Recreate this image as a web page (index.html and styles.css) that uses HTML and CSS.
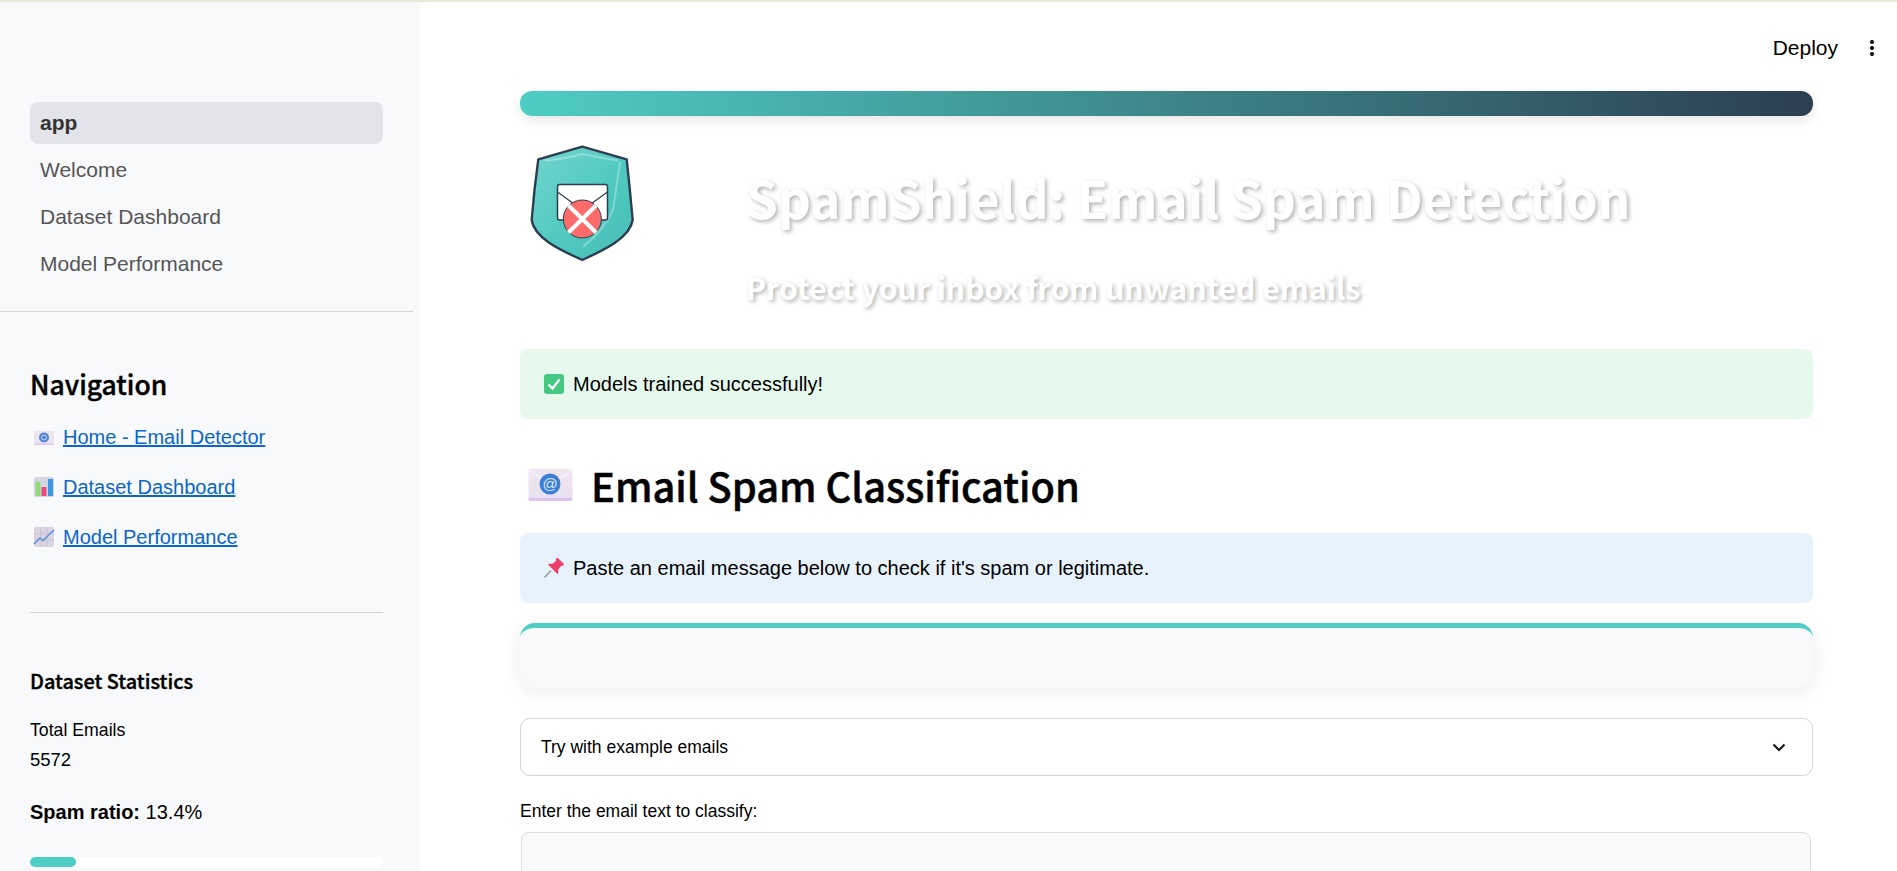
FILE: index.html
```html
<!DOCTYPE html>
<html>
<head>
  <title>SpamShield</title>
  <meta charset="UTF-8">
  <link rel="stylesheet" href="styles.css">
</head>
<body>
  <div class="top-line"></div>
  <div class="app">
    <aside class="sidebar">
      <nav class="page-nav">
        <a class="page-link active">app</a>
        <a class="page-link">Welcome</a>
        <a class="page-link">Dataset Dashboard</a>
        <a class="page-link">Model Performance</a>
      </nav>
      <div class="nav-rule"></div>
      <div class="side-content">
        <h2 class="side-title">Navigation</h2>
        <p class="side-link">
          <svg class="side-icon" viewBox="0 0 22 22">
            <rect x="1" y="5" width="20" height="14" fill="#ece4f0"/>
            <rect x="1" y="17.5" width="20" height="1.5" fill="#dcc6f0"/>
            <circle cx="11" cy="11.5" r="5" fill="#5585d2"/>
            <circle cx="11" cy="11.5" r="2.4" fill="none" stroke="#c9d8f2" stroke-width="1"/>
          </svg>
          <a>Home - Email Detector</a>
        </p>
        <p class="side-link">
          <svg class="side-icon" viewBox="0 0 22 22">
            <rect x="1" y="1" width="20" height="20" rx="2" fill="#d5d3de"/>
            <rect x="2.5" y="6" width="5" height="14" fill="#8fdc7a"/>
            <rect x="8.5" y="11" width="5" height="9" fill="#ea4a7c"/>
            <rect x="15" y="3" width="5" height="17" fill="#3b97e0"/>
          </svg>
          <a>Dataset Dashboard</a>
        </p>
        <p class="side-link">
          <svg class="side-icon" viewBox="0 0 22 22">
            <rect x="1" y="1" width="20" height="20" rx="2" fill="#d9d3e2"/>
            <path d="M1 7.5H21M1 14H21M7.5 1V21M14 1V21" stroke="#c6bdd2" stroke-width=".7"/>
            <path d="M1 18L7 12L10 14.5L21 4" fill="none" stroke="#5a90d8" stroke-width="1.6"/>
          </svg>
          <a>Model Performance</a>
        </p>
        <div class="side-rule"></div>
        <h3 class="stats-title">Dataset Statistics</h3>
        <p class="stat-label">Total Emails</p>
        <p class="stat-value">5572</p>
        <p class="ratio"><strong>Spam ratio:</strong> 13.4%</p>
        <div class="progress"><div class="progress-fill" style="width: 13%"></div></div>
      </div>
    </aside>

    <main class="main">
      <header class="toolbar">
        <span class="deploy">Deploy</span>
        <svg class="menu-dots" viewBox="0 0 6 18" width="6" height="18">
          <circle cx="3" cy="3" r="2"/>
          <circle cx="3" cy="9" r="2"/>
          <circle cx="3" cy="15" r="2"/>
        </svg>
      </header>
      <div class="content">
        <div class="gradient-bar"></div>
        <section class="hero">
          <svg class="logo" viewBox="0 0 130 130" width="130" height="130">
            <defs>
              <linearGradient id="shieldFill" x1="0" y1="0" x2="1" y2="1">
                <stop offset="0" stop-color="#74d5ce"/>
                <stop offset=".55" stop-color="#4fc9c0"/>
                <stop offset="1" stop-color="#47bdb4"/>
              </linearGradient>
            </defs>
            <path d="M62.3 6.7L106.7 19.3Q110 50 112.7 80C110 98 84 110 62.3 120C40 110 14 98 11.7 80Q14 50 18.3 19.3Z" fill="url(#shieldFill)" stroke="#2c3e50" stroke-width="2.4" stroke-linejoin="round"/>
            <path d="M25 20.5Q48 18 62.3 14Q80 18 98 20.5" fill="none" stroke="#fff" stroke-opacity=".3" stroke-width="2"/>
            <path d="M100 22Q96 50 93 70Q84 90 62.7 107" fill="none" stroke="#fff" stroke-opacity=".3" stroke-width="2"/>
            <rect x="37.5" y="44.5" width="50" height="35.5" rx="2" fill="#fff" stroke="#2c3e50" stroke-width="1.5"/>
            <path d="M37.5 52L62.5 70L87.5 52" fill="none" stroke="#2c3e50" stroke-width="1.2"/>
            <circle cx="62.3" cy="79" r="19" fill="#ff6b6b" stroke="#2c3e50" stroke-width="1"/>
            <path d="M48.500 65.500L76 92.500M76 65.500L48.500 92.500" stroke="#fff" stroke-width="4"/>
          </svg>
          <div class="hero-text">
            <h1 class="hero-title">SpamShield: Email Spam Detection</h1>
            <p class="hero-sub">Protect your inbox from unwanted emails</p>
          </div>
        </section>

        <div class="alert alert-success">
          <svg class="alert-icon" viewBox="0 0 22 22">
            <rect x="1" y="1" width="20" height="20" rx="3" fill="#46c883"/>
            <path d="M5.5 11.5L9.5 15.5L16.5 6.5" fill="none" stroke="#fff" stroke-width="2.2"/>
          </svg>
          <span>Models trained successfully!</span>
        </div>

        <h2 class="section-title">
          <svg class="title-icon" viewBox="0 0 45 32">
            <defs>
              <linearGradient id="envFill" x1="0" y1="0" x2="0" y2="1">
                <stop offset="0" stop-color="#efe6ef"/>
                <stop offset="1" stop-color="#e9e0f0"/>
              </linearGradient>
            </defs>
            <rect x="0.5" y="0" width="44" height="32" rx="2.5" fill="url(#envFill)"/>
            <path d="M0.5 29H44.5V29.5A2.5 2.5 0 0 1 42 32H3A2.5 2.5 0 0 1 0.5 29.5Z" fill="#dcc3f0"/>
            <path d="M1 1L22.5 16L44 1" fill="none" stroke="#f8f4f8" stroke-width="1.4"/>
            <circle cx="22" cy="15" r="10.5" fill="#3a7fd5"/>
            <text x="22" y="20" class="at-sign">@</text>
          </svg>
          <span>Email Spam Classification</span>
        </h2>

        <div class="alert alert-info">
          <svg class="alert-icon" viewBox="0 0 22 22">
            <path d="M1.5 20.5L8 13.5" stroke="#9a9aa5" stroke-width="1.6"/>
            <path d="M13 1.5C14 .8 15 1 15.5 1.5L20.5 6.5C21 7 21 8.3 20 8.8L18 9L15 13C15.500 14.500 15.500 16 14.500 17L5 7.500C6 6.500 7.500 6.500 9 7L13 4Z" fill="#ec3f69"/>
          </svg>
          <span>Paste an email message below to check if it's spam or legitimate.</span>
        </div>

        <div class="card"></div>

        <div class="select">
          <span>Try with example emails</span>
          <svg viewBox="0 0 14 9" width="14" height="9" class="chevron">
            <path d="M1.5 1.5L7 7L12.5 1.5" fill="none" stroke="#111" stroke-width="2"/>
          </svg>
        </div>

        <label class="field-label">Enter the email text to classify:</label>
        <div class="textarea"></div>
      </div>
    </main>
  </div>
</body>
</html>
```

FILE: styles.css
```css
html, body {
  height: 100%;
}
body {
  margin: 0;
  overflow: hidden;
  background-color: #ffffff;
  color: #000000;
  font-family: "Liberation Sans", Arial, sans-serif;
}
.top-line {
  height: 2px;
  background-color: #e8e9d9;
}
.app {
  display: flex;
  height: calc(100% - 2px);
  overflow: hidden;
}

/* sidebar */
.sidebar {
  width: 420px;
  flex-shrink: 0;
  background-color: #f8f9fb;
  overflow: hidden;
}
.page-nav {
  display: flex;
  flex-direction: column;
  gap: 5px;
  padding: 100px 37px 0 30px;
}
.page-link {
  height: 42px;
  line-height: 42px;
  padding-left: 10px;
  border-radius: 8px;
  font-size: 21px;
  color: #555555;
}
.page-link.active {
  background-color: #e3e3eb;
  color: #333333;
  font-weight: bold;
}
.nav-rule {
  height: 1px;
  margin: 26px 7px 0 0;
  background-color: #d5d5d8;
}
.side-content {
  padding: 0 37px 0 30px;
}
.side-title {
  margin: 52px 0 0 0;
  font-family: "Noto Sans CJK SC", "Noto Sans", sans-serif;
  font-size: 26.500px;
  line-height: 40px;
  font-weight: 500;
  -webkit-text-stroke: 0.4px #000000;
}
.side-link {
  display: flex;
  align-items: center;
  gap: 8px;
  height: 26px;
  margin: 20px 0 24px 3px;
  font-size: 20px;
}
.side-link a {
  color: #0a66c8;
  text-decoration: underline;
}
.side-icon {
  width: 22px;
  height: 22px;
}
.side-rule {
  height: 1px;
  margin-top: 62px;
  background-color: #d5d5d8;
}
.stats-title {
  margin: 52px 0 0 0;
  font-family: "Noto Sans CJK SC", "Noto Sans", sans-serif;
  font-size: 19.900px;
  line-height: 32px;
  font-weight: 500;
  -webkit-text-stroke: 0.4px #000000;
}
.stat-label {
  margin: 18px 0 0 0;
  font-size: 17.700px;
  line-height: 30px;
}
.stat-value {
  margin: 0;
  font-size: 18.500px;
  line-height: 30px;
}
.ratio {
  margin: 22px 0 0 0;
  font-size: 20px;
  line-height: 30px;
}
.progress {
  height: 10px;
  margin-top: 30px;
  border-radius: 6px;
  background-color: #ffffff;
}
.progress-fill {
  height: 100%;
  border-radius: 6px;
  background-color: #4ecdc4;
}

/* main column */
.main {
  flex: 1;
  min-width: 0;
}
.toolbar {
  display: flex;
  align-items: center;
  justify-content: flex-end;
  gap: 31px;
  height: 30px;
  padding: 31px 22px 0 0;
}
.deploy {
  font-size: 21px;
}
.content {
  padding: 28px 84px 0 100px;
}
.gradient-bar {
  height: 25px;
  border-radius: 12px;
  background: linear-gradient(90deg, #4ecdc4, #2c3e50);
  box-shadow: 0 4px 12px rgba(0, 0, 0, 0.1);
}
.hero {
  display: flex;
  height: 233px;
  padding-top: 24px;
  box-sizing: border-box;
}
.logo {
  flex-shrink: 0;
}
.hero-text {
  margin-left: 96px;
}
.hero-title {
  margin: 21px 0 0 0;
  font-family: "Noto Sans CJK SC", "Noto Sans", sans-serif;
  font-size: 51.150px;
  line-height: 72px;
  font-weight: 700;
  color: #ffffff;
  text-shadow: 2px 2px 4px rgba(0, 0, 0, 0.3);
}
.hero-sub {
  margin: 34px 0 0 0;
  font-family: "Noto Sans CJK SC", "Noto Sans", sans-serif;
  font-size: 30.150px;
  line-height: 40px;
  font-weight: 600;
  color: #ffffff;
  text-shadow: 2px 2px 4px rgba(0, 0, 0, 0.3);
}
.alert {
  display: flex;
  align-items: center;
  gap: 8px;
  height: 70px;
  padding-left: 23px;
  border-radius: 8px;
  font-size: 20px;
}
.alert-success {
  background-color: #e6f9ed;
}
.alert-info {
  background-color: #e7f2fd;
}
.alert-icon {
  width: 22px;
  height: 22px;
}
.section-title {
  display: flex;
  align-items: center;
  gap: 18px;
  box-sizing: border-box;
  height: 114px;
  margin: 0;
  padding: 17px 0 0 8px;
  font-family: "Noto Sans CJK SC", "Noto Sans", sans-serif;
  font-size: 39.800px;
  font-weight: 500;
  -webkit-text-stroke: 0.5px #000000;
}
.title-icon {
  width: 45px;
  height: 32px;
}
.at-sign {
  font-family: "Liberation Sans", sans-serif;
  font-size: 15px;
  fill: #dbe7f8;
  text-anchor: middle;
  stroke-width: 0;
}
.card {
  height: 60px;
  margin-top: 20px;
  border-top: 5px solid #4ecdc4;
  border-radius: 15px;
  background-color: #f8f9fa;
  box-shadow: 0 4px 20px rgba(0, 0, 0, 0.08);
}
.select {
  display: flex;
  align-items: center;
  justify-content: space-between;
  box-sizing: border-box;
  height: 58px;
  margin-top: 30px;
  padding: 0 26px 0 20px;
  border: 1px solid #d5d5d8;
  border-radius: 10px;
  font-size: 17.500px;
}
.field-label {
  display: block;
  margin-top: 24px;
  font-size: 17.500px;
  line-height: 22px;
}
.textarea {
  height: 200px;
  margin: 10px 2px 0 1px;
  border: 1px solid #dddddd;
  border-radius: 8px;
  background-color: #f8f9fa;
}
```
